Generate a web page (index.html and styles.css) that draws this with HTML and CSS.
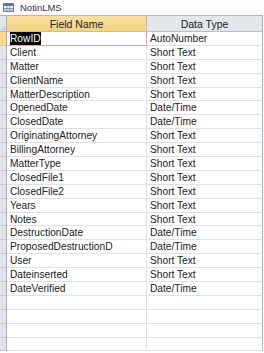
FILE: index.html
```html
<!doctype html>
<html>
<head>
  <title>NotinLMS</title>
  <link rel="stylesheet" href="styles.css">
</head>
<body>
  <div class="titlebar">
    <svg class="tableicon" width="11" height="9" viewBox="0 0 11 9">
      <rect x="0.5" y="0.5" width="10" height="8" fill="#fff" stroke="#6d7f99"/>
      <rect x="1" y="1" width="9" height="2" fill="#4f74ae"/>
      <path d="M1 5.5h9M1 7h9M4 3v5.5M7 3v5.5" stroke="#8c9bb0" stroke-width="1" fill="none"/>
    </svg>
    <span class="tabname">NotinLMS</span>
  </div>

  <div class="grid">
    <div class="row head">
      <div class="sel corner"><span class="tri"></span></div>
      <div class="cell hd active">Field Name</div>
      <div class="cell hd">Data Type</div>
    </div>
    <div class="row current">
      <div class="sel on"></div>
      <div class="cell name focus"><span class="picked">RowID</span></div>
      <div class="cell">AutoNumber</div>
    </div>
    <div class="row"><div class="sel"></div><div class="cell name">Client</div><div class="cell">Short Text</div></div>
    <div class="row"><div class="sel"></div><div class="cell name">Matter</div><div class="cell">Short Text</div></div>
    <div class="row"><div class="sel"></div><div class="cell name">ClientName</div><div class="cell">Short Text</div></div>
    <div class="row"><div class="sel"></div><div class="cell name">MatterDescription</div><div class="cell">Short Text</div></div>
    <div class="row"><div class="sel"></div><div class="cell name">OpenedDate</div><div class="cell">Date/Time</div></div>
    <div class="row"><div class="sel"></div><div class="cell name">ClosedDate</div><div class="cell">Date/Time</div></div>
    <div class="row"><div class="sel"></div><div class="cell name">OriginatingAttorney</div><div class="cell">Short Text</div></div>
    <div class="row"><div class="sel"></div><div class="cell name">BillingAttorney</div><div class="cell">Short Text</div></div>
    <div class="row"><div class="sel"></div><div class="cell name">MatterType</div><div class="cell">Short Text</div></div>
    <div class="row"><div class="sel"></div><div class="cell name">ClosedFile1</div><div class="cell">Short Text</div></div>
    <div class="row"><div class="sel"></div><div class="cell name">ClosedFile2</div><div class="cell">Short Text</div></div>
    <div class="row"><div class="sel"></div><div class="cell name">Years</div><div class="cell">Short Text</div></div>
    <div class="row"><div class="sel"></div><div class="cell name">Notes</div><div class="cell">Short Text</div></div>
    <div class="row"><div class="sel"></div><div class="cell name">DestructionDate</div><div class="cell">Date/Time</div></div>
    <div class="row"><div class="sel"></div><div class="cell name">ProposedDestructionD</div><div class="cell">Date/Time</div></div>
    <div class="row"><div class="sel"></div><div class="cell name">User</div><div class="cell">Short Text</div></div>
    <div class="row"><div class="sel"></div><div class="cell name">Dateinserted</div><div class="cell">Short Text</div></div>
    <div class="row"><div class="sel"></div><div class="cell name">DateVerified</div><div class="cell">Date/Time</div></div>
    <div class="row"><div class="sel"></div><div class="cell name"></div><div class="cell"></div></div>
    <div class="row"><div class="sel"></div><div class="cell name"></div><div class="cell"></div></div>
    <div class="row"><div class="sel"></div><div class="cell name"></div><div class="cell"></div></div>
    <div class="row"><div class="sel"></div><div class="cell name"></div><div class="cell"></div></div>
  </div>
</body>
</html>
```

FILE: styles.css
```css
html, body { margin: 0; padding: 0; background: #fff; }
body {
  font-family: "Liberation Sans", Arial, sans-serif;
  font-size: 10.2px;
  color: #222;
  overflow: hidden;
}

.titlebar {
  display: flex;
  align-items: center;
  height: 15px;
  padding-left: 3px;
  gap: 6px;
}
.tableicon { display: block; }
.tabname { font-size: 9.5px; color: #333; }

.grid {
  width: 263px;
  border-top: 1px solid #e8a3a7;
}
.row {
  display: grid;
  grid-template-columns: 7px 140px 116px;
  height: 13.9px;
  box-sizing: border-box;
}
.row.head { height: 16px; }

.sel {
  background: #e1e4e9;
  border-right: 1px solid #a9aeb6;
  border-bottom: 1px solid #c4c9d1;
}
.sel.on { background: #f8d98f; }
.corner { position: relative; border-bottom-color: #a9aeb6; }
.tri {
  position: absolute;
  right: 1px;
  bottom: 1px;
  width: 0;
  height: 0;
  border-left: 4px solid transparent;
  border-bottom: 4px solid #c4c9d0;
}

.cell {
  box-sizing: border-box;
  border-right: 1px solid #dde2e9;
  border-bottom: 1px solid #dde2e9;
  padding: 1px 0 0 3px;
  line-height: 12px;
  white-space: nowrap;
  overflow: hidden;
}
.cell:last-child { border-right: 1px solid #aab0b8; }

.hd {
  text-align: center;
  padding: 2px 0 0;
  font-size: 10.5px;
  background: #e4e7ec;
  border-bottom-color: #b9bec6;
  border-right-color: #c4c9d0;
}
.hd.active {
  background: linear-gradient(#fbe2a2, #f7d27d);
  border-right-color: #e8a3a7;
}

.focus {
  border-right-color: #e8a3a7;
  border-bottom-color: #e8a3a7;
}
.picked {
  background: #000;
  color: #fff;
  padding: 1px 0;
}
```
